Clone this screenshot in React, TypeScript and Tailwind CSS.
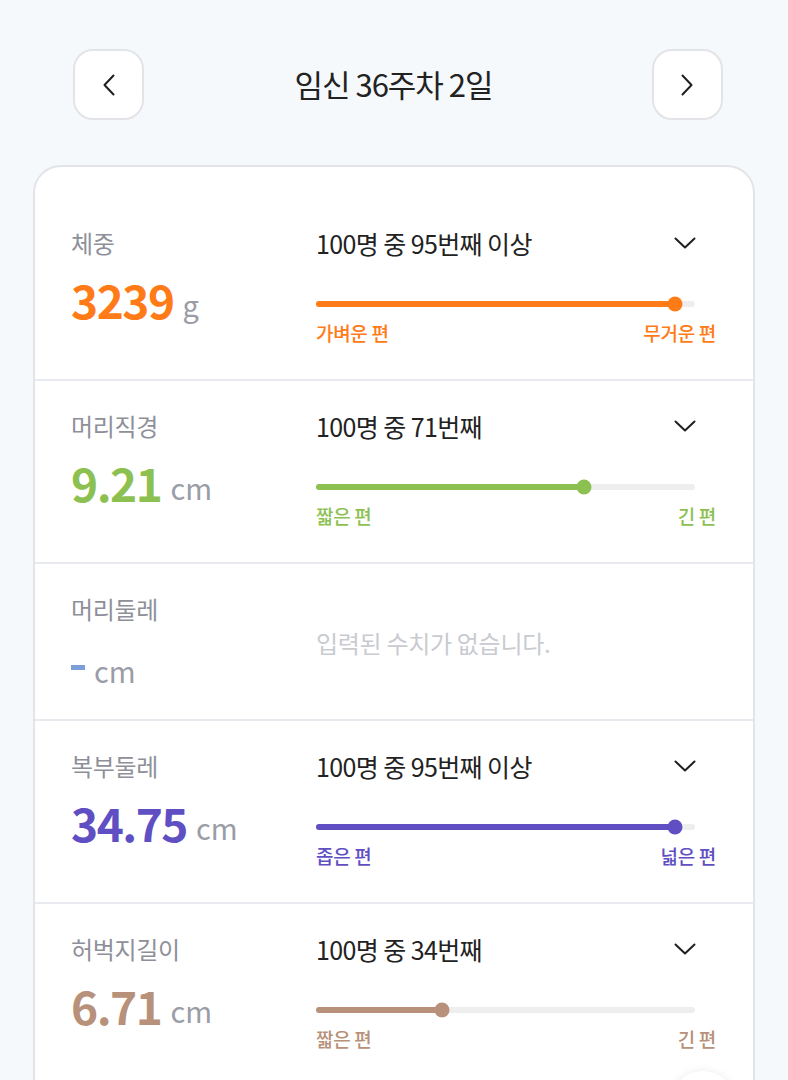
import React from "react";

const FONT = { fontFamily: '"Noto Sans CJK KR", "Noto Sans", sans-serif' };

type Row = {
  label: string;
  value: string;
  unit: string;
  rank?: string;
  pos?: number;
  left?: string;
  right?: string;
  textCls: string;
  bgCls: string;
};

const rows: Row[] = [
  { label: "체중", value: "3239", unit: "g", rank: "100명 중 95번째 이상", pos: 94.7, left: "가벼운 편", right: "무거운 편", textCls: "text-[#ff7b17]", bgCls: "bg-[#ff7b17]" },
  { label: "머리직경", value: "9.21", unit: "cm", rank: "100명 중 71번째", pos: 70.6, left: "짧은 편", right: "긴 편", textCls: "text-[#8cc152]", bgCls: "bg-[#8cc152]" },
  { label: "머리둘레", value: "-", unit: "cm", textCls: "text-[#7ba0d9]", bgCls: "bg-[#7ba0d9]" },
  { label: "복부둘레", value: "34.75", unit: "cm", rank: "100명 중 95번째 이상", pos: 94.7, left: "좁은 편", right: "넓은 편", textCls: "text-[#5f4fc3]", bgCls: "bg-[#5f4fc3]" },
  { label: "허벅지길이", value: "6.71", unit: "cm", rank: "100명 중 34번째", pos: 33.3, left: "짧은 편", right: "긴 편", textCls: "text-[#b8917a]", bgCls: "bg-[#b8917a]" },
];

function ChevronDown() {
  return (
    <svg width="22" height="12" viewBox="0 0 22 12" fill="none">
      <path d="M1.5 1.5 L11 10.5 L20.5 1.5" stroke="#1f1f1f" strokeWidth="2" strokeLinecap="round" strokeLinejoin="round" />
    </svg>
  );
}

function MeasureRow({ r, last }: { r: Row; last: boolean }) {
  const empty = !r.rank;
  return (
    <div className={`flex pl-[36px] pr-[37px] pt-[28px] ${empty ? "pb-[24px]" : "pb-[34px]"} ${last ? "" : "border-b-2 border-[#e9eaef]"}`}>
      <div className="w-[245px] shrink-0">
        <div className="text-[24px] leading-[34px] text-[#8e9099] tracking-[-0.3px]">{r.label}</div>
        <div className="mt-[9px] h-[60px] flex items-center">
          {r.value === "-" ? (
            <span className="inline-block w-[14px] h-[5px] bg-[#7ba0d9] mr-[9px] mt-[4px]" />
          ) : (
            <span className={`text-[46px] font-bold tracking-[-1.5px] leading-[60px] ${r.textCls}`}>{r.value}</span>
          )}
          <span className={`text-[29px] text-[#9a9ca6] leading-[60px] mt-[10px] ${r.value === "-" ? "" : "ml-[9px]"}`}>{r.unit}</span>
        </div>
      </div>
      {empty ? (
        <div className="flex-1">
          <div className="mt-[34px] text-[24px] leading-[34px] text-[#c9cbd0] tracking-[-0.3px]">입력된 수치가 없습니다.</div>
        </div>
      ) : (
        <div className="flex-1">
          <div className="flex items-center justify-between pr-[20px]">
            <span className="text-[25px] leading-[34px] text-[#222222] tracking-[-0.6px]">{r.rank}</span>
            <ChevronDown />
          </div>
          <div className="mt-[36px] h-[16px] flex items-center mr-[21px]">
            <div className="relative w-full h-[6px] rounded-full bg-[#eeeeee]">
              <div className={`absolute left-0 top-0 h-full rounded-full ${r.bgCls}`} style={{ width: `${r.pos}%` }} />
              <div
                className={`absolute top-1/2 w-[15px] h-[15px] rounded-full -translate-x-1/2 -translate-y-1/2 ${r.bgCls}`}
                style={{ left: `${r.pos}%` }}
              />
            </div>
          </div>
          <div className={`mt-[9px] flex justify-between text-[19px] leading-[24px] font-medium tracking-[-0.3px] ${r.textCls}`}>
            <span>{r.left}</span>
            <span>{r.right}</span>
          </div>
        </div>
      )}
    </div>
  );
}

export default function App() {
  return (
    <div className="relative min-h-[1080px] bg-[#f6f9fb] overflow-hidden" style={FONT}>
      <div className="flex items-center justify-between pt-[49px] pr-[65px] pl-[73px]">
        <button className="w-[71px] h-[71px] rounded-[20px] border-2 border-[#e3e4e8] bg-white flex items-center justify-center">
          <svg width="12" height="22" viewBox="0 0 12 22" fill="none">
            <path d="M10.5 1.5 L1.5 11 L10.5 20.5" stroke="#1f1f1f" strokeWidth="2" strokeLinecap="round" strokeLinejoin="round" />
          </svg>
        </button>
        <div className="text-[31px] text-[#222222] tracking-[-1px] mr-[9px]">임신 36주차 2일</div>
        <button className="w-[71px] h-[71px] rounded-[20px] border-2 border-[#e3e4e8] bg-white flex items-center justify-center">
          <svg width="12" height="22" viewBox="0 0 12 22" fill="none">
            <path d="M1.5 1.5 L10.5 11 L1.5 20.5" stroke="#1f1f1f" strokeWidth="2" strokeLinecap="round" strokeLinejoin="round" />
          </svg>
        </button>
      </div>
      <div className="mx-[33px] mt-[45px] bg-white border-2 border-[#e3e4e8] rounded-[28px] pt-[31px] pb-[30px]">
        {rows.map((r, i) => (
          <MeasureRow key={i} r={r} last={i === rows.length - 1} />
        ))}
      </div>
      <div className="absolute left-[670px] top-[1071px] w-[66px] h-[66px] rounded-full bg-white shadow-[0_0_8px_rgba(0,0,0,0.08)]" />
    </div>
  );
}
